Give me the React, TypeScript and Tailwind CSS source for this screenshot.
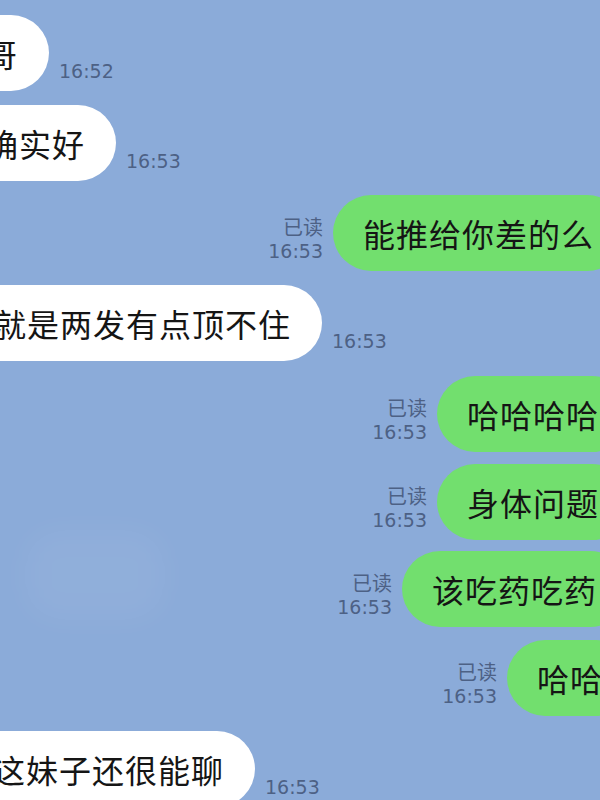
import React from "react";

type Msg = {
  side: "in" | "out";
  text: string;
  time: string;
  edge: string; // negative margin that pushes the bubble past the screen edge
  top: string;
};

const messages: Msg[] = [
  { side: "in", text: "哥", time: "16:52", edge: "-ml-[45px]", top: "mt-[15px]" },
  { side: "in", text: "确实好", time: "16:53", edge: "-ml-[44px]", top: "mt-[14px]" },
  { side: "out", text: "能推给你差的么", time: "16:53", edge: "-mr-[25px]", top: "mt-[14px]" },
  { side: "in", text: "就是两发有点顶不住", time: "16:53", edge: "-ml-[36px]", top: "mt-[14px]" },
  { side: "out", text: "哈哈哈哈", time: "16:53", edge: "-mr-[30px]", top: "mt-[15px]" },
  { side: "out", text: "身体问题", time: "16:53", edge: "-mr-[30px]", top: "mt-[12px]" },
  { side: "out", text: "该吃药吃药", time: "16:53", edge: "-mr-[28px]", top: "mt-[11px]" },
  { side: "out", text: "哈哈", time: "16:53", edge: "-mr-[34px]", top: "mt-[13px]" },
  { side: "in", text: "这妹子还很能聊", time: "16:53", edge: "-ml-[37px]", top: "mt-[15px]" },
];

const cjk = "font-['Noto_Sans_CJK_SC',sans-serif]";

const Bubble = ({ msg }: { msg: Msg }) => (
  <div
    className={`${msg.edge} h-[76px] shrink-0 flex items-center rounded-full pl-[30px] pr-[31px] ${cjk} text-[32px] tracking-[1px] text-[#151515] whitespace-nowrap ${
      msg.side === "in" ? "bg-white" : "bg-[#72df6e]"
    }`}
  >
    {msg.text}
  </div>
);

const Meta = ({ msg }: { msg: Msg }) => (
  <div className="shrink-0 flex flex-col items-end pb-[8px] text-[#4d6185] font-['DejaVu_Sans','Noto_Sans_CJK_SC',sans-serif] leading-[24px]">
    {msg.side === "out" && <span className={`${cjk} text-[20px]`}>已读</span>}
    <span className="text-[19px]">{msg.time}</span>
  </div>
);

export default function App() {
  return (
    <div className="relative w-[600px] h-[800px] overflow-hidden bg-[#8babd9]">
      <div className="absolute left-[25px] top-[530px] w-[140px] h-[90px] rounded-[30px] bg-white/5 blur-lg" />
      <div className="relative flex flex-col">
        {messages.map((m, i) =>
          m.side === "in" ? (
            <div key={i} className={`${m.top} flex items-end justify-start gap-[10px]`}>
              <Bubble msg={m} />
              <Meta msg={m} />
            </div>
          ) : (
            <div key={i} className={`${m.top} flex items-end justify-end gap-[10px]`}>
              <Meta msg={m} />
              <Bubble msg={m} />
            </div>
          )
        )}
      </div>
    </div>
  );
}
